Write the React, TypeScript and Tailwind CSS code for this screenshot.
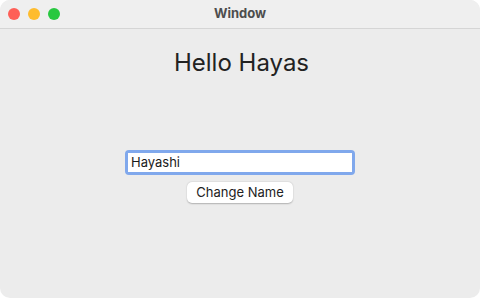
export default function App() {
  return (
    <div className="w-[480px] h-[298px] bg-white font-['Inter','Noto_Sans',sans-serif]">
      <div className="w-full h-full rounded-[10px] overflow-hidden bg-[#ececec] flex flex-col">
        <div className="h-[29px] shrink-0 bg-[#efefef] border-b border-[#d5d5d5] flex items-center relative">
          <div className="flex gap-[8px] pl-[8px]">
            <span className="w-[12px] h-[12px] rounded-full bg-[#fe5f57]" />
            <span className="w-[12px] h-[12px] rounded-full bg-[#febc2e]" />
            <span className="w-[12px] h-[12px] rounded-full bg-[#28c840]" />
          </div>
          <div className="absolute inset-0 flex items-center justify-center text-[13px] font-bold text-[#4d4d4d]">
            Window
          </div>
        </div>
        <div className="flex flex-col items-center">
          <h1 className="mt-[19px] text-[24px] leading-[29px] text-[#222222] ml-[3px]">Hello Hayas</h1>
          <div className="mt-[73px] w-[230px] rounded-[4px] bg-[#80a8ec] p-[3px]">
            <input
              className="block w-full h-[19px] bg-white px-[3px] text-[13px] text-[#1a1a1a] outline-none"
              defaultValue="Hayashi"
              readOnly
            />
          </div>
          <button className="mt-[7px] w-[106px] h-[21px] rounded-[5px] bg-white text-[13px] text-[#222222] shadow-[0_0.5px_1.5px_rgba(0,0,0,0.25)]">
            Change Name
          </button>
        </div>
      </div>
    </div>
  );
}
